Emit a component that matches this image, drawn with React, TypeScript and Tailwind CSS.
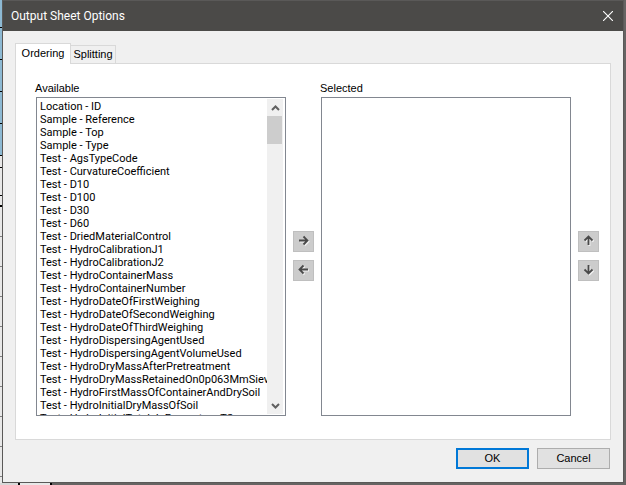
import type { ReactNode } from 'react';

const fields = [
  'Location - ID',
  'Sample - Reference',
  'Sample - Top',
  'Sample - Type',
  'Test - AgsTypeCode',
  'Test - CurvatureCoefficient',
  'Test - D10',
  'Test - D100',
  'Test - D30',
  'Test - D60',
  'Test - DriedMaterialControl',
  'Test - HydroCalibrationJ1',
  'Test - HydroCalibrationJ2',
  'Test - HydroContainerMass',
  'Test - HydroContainerNumber',
  'Test - HydroDateOfFirstWeighing',
  'Test - HydroDateOfSecondWeighing',
  'Test - HydroDateOfThirdWeighing',
  'Test - HydroDispersingAgentUsed',
  'Test - HydroDispersingAgentVolumeUsed',
  'Test - HydroDryMassAfterPretreatment',
  'Test - HydroDryMassRetainedOn0p063MmSieve',
  'Test - HydroFirstMassOfContainerAndDrySoil',
  'Test - HydroInitialDryMassOfSoil',
  'Test - HydroInitialTotalsInPercentageTS',
];

const arrows = {
  right: 'M1 5.5H9.5M5.5 1.5L9.5 5.5L5.5 9.5',
  left: 'M10 5.5H1.5M5.5 1.5L1.5 5.5L5.5 9.5',
  up: 'M5.5 10V1.5M1.5 5.5L5.5 1.5L9.5 5.5',
  down: 'M5.5 1V9.5M1.5 5.5L5.5 9.5L9.5 5.5',
};

function ArrowButton({ dir, label }: { dir: keyof typeof arrows; label: string }) {
  return (
    <button aria-label={label} className="flex h-[21px] w-[21px] items-center justify-center border border-[#bfbfbf] bg-[#cccccc] pb-0.5">
      <svg width="12" height="12" viewBox="0 0 12 12" fill="none" strokeWidth="1.8">
        <path d={arrows[dir]} stroke="#f2f2f2" transform="translate(1 1)" />
        <path d={arrows[dir]} stroke="#4a4a4a" />
      </svg>
    </button>
  );
}

function Chevron({ d }: { d: string }) {
  return (
    <svg width="9" height="6" viewBox="0 0 9 6" fill="none" stroke="#606060" strokeWidth="2">
      <path d={d} />
    </svg>
  );
}

function ListColumn({ id, label, items, children }: { id: string; label: string; items: string[]; children?: ReactNode }) {
  return (
    <div className="flex min-w-0 flex-1 flex-col">
      <label htmlFor={id} className="h-[17px] leading-4">
        {label}
      </label>
      <div className="ml-px flex h-[319px] border border-[#828790] bg-white px-px pt-px">
        <select
          id={id}
          multiple
          className="h-full min-w-0 flex-1 appearance-none overflow-y-auto border-0 bg-white p-0 pt-px font-[Roboto,sans-serif] text-[11px] text-black outline-none [scrollbar-width:none]"
        >
          {items.map((item) => (
            <option key={item} className="h-[13px] min-h-0 overflow-hidden px-0.5 py-0 leading-[13px]">
              {item}
            </option>
          ))}
        </select>
        {children}
      </div>
    </div>
  );
}

function ScrollBar() {
  return (
    <div className="mr-px mb-px flex w-4 flex-col bg-[#f0f0f0]">
      <button aria-label="Scroll up" className="flex h-[17px] items-center justify-center">
        <Chevron d="M1 5L4.5 1.5L8 5" />
      </button>
      <div className="mr-px h-7 bg-[#cdcdcd]" />
      <button aria-label="Scroll down" className="mt-auto flex h-[17px] items-center justify-center">
        <Chevron d="M1 1L4.5 4.5L8 1" />
      </button>
    </div>
  );
}

// The worksheet that shows past the left edge of the dialog
function SheetEdge() {
  return (
    <div className="flex w-0.5 flex-col overflow-hidden bg-[#e8e8e8]">
      <div className="h-7 border-b border-black bg-[#8db9d3]" />
      <div className="h-8 border-b border-black bg-[#8db9d3]" />
      <div className="h-8 border-b border-black bg-[#8db9d3]" />
      <div className="h-8 border-b border-black bg-[#8db9d3]" />
      <div className="h-8 border-b border-black bg-[#8db9d3]" />
      <div className="h-3 border-b border-black" />
      <div className="h-7 border-b border-black" />
      <div className="h-[11px] border-b-2 border-black" />
      {[1, 2, 3, 4, 5, 6, 7, 8, 9].map((row) => (
        <div key={row} className="h-[30px] shrink-0 border-b border-[#808080]" />
      ))}
    </div>
  );
}

export default function App() {
  return (
    <div className="flex h-screen flex-col bg-[#666463] font-['Liberation_Sans',Arial,sans-serif] text-[11px] text-black">
      <div className="flex min-h-0 flex-1">
        <SheetEdge />
        <div role="dialog" aria-labelledby="title" className="mr-0.5 flex min-w-0 flex-1 flex-col border border-[#5a5958] bg-[#f0f0f0]">
          <header className="flex h-[30px] items-center justify-between bg-[#4b4a48] pr-2.5 pl-2 text-white">
            <h1 id="title" className="font-[Roboto,sans-serif] text-xs">
              Output Sheet Options
            </h1>
            <button aria-label="Close">
              <svg width="10" height="10" viewBox="0 0 10 10" fill="none" stroke="#fff" strokeWidth="1.1">
                <path d="M0 0L10 10M10 0L0 10" />
              </svg>
            </button>
          </header>
          <main className="flex flex-1 flex-col px-3 pt-3">
            <div role="tablist" className="flex items-end">
              <button role="tab" aria-selected="true" className="z-10 -mb-px h-[21px] w-14 border border-b-0 border-[#d9d9d9] bg-white pb-0.5">
                Ordering
              </button>
              <button role="tab" aria-selected="false" className="h-[18px] w-[45px] border border-b-0 border-l-0 border-[#d9d9d9] bg-[#f0f0f0]">
                Splitting
              </button>
            </div>
            <section role="tabpanel" className="flex h-[377px] border border-[#d9d9d9] bg-white pt-4 pr-[11px] pl-[19px]">
              <ListColumn id="available" label="Available" items={fields}>
                <ScrollBar />
              </ListColumn>
              <div className="mr-1.5 ml-[7px] flex flex-col gap-2 pt-[151px]">
                <ArrowButton dir="right" label="Add" />
                <ArrowButton dir="left" label="Remove" />
              </div>
              <ListColumn id="selected" label="Selected" items={[]} />
              <div className="ml-[7px] flex flex-col gap-2 pt-[151px]">
                <ArrowButton dir="up" label="Move up" />
                <ArrowButton dir="down" label="Move down" />
              </div>
            </section>
            <footer className="flex justify-end gap-2 pt-2 pr-px">
              <button className="h-[21px] w-[73px] border-2 border-[#0078d7] bg-[#e1e1e1]">OK</button>
              <button className="h-[21px] w-[73px] border border-[#adadad] bg-[#e1e1e1]">Cancel</button>
            </footer>
          </main>
        </div>
      </div>
      <div className="flex h-[2px]">
        <div className="w-[18px] bg-[#d8d8d8]" />
        <div className="w-[34px] border-x-2 border-black bg-[#e8e8e8]" />
      </div>
    </div>
  );
}
